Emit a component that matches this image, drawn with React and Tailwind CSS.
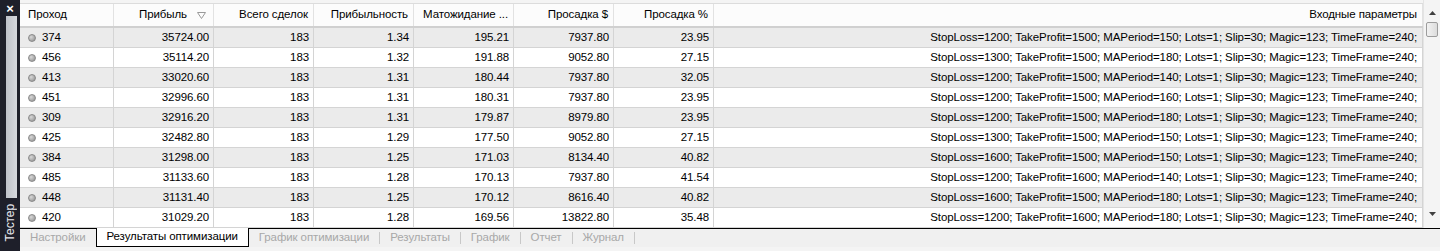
import React from "react";

const rows = [
  ["374", "35724.00", "183", "1.34", "195.21", "7937.80", "23.95", 1200, 1500, 150],
  ["456", "35114.20", "183", "1.32", "191.88", "9052.80", "27.15", 1300, 1500, 180],
  ["413", "33020.60", "183", "1.31", "180.44", "7937.80", "32.05", 1200, 1500, 140],
  ["451", "32996.60", "183", "1.31", "180.31", "7937.80", "23.95", 1200, 1500, 160],
  ["309", "32916.20", "183", "1.31", "179.87", "8979.80", "23.95", 1200, 1500, 180],
  ["425", "32482.80", "183", "1.29", "177.50", "9052.80", "27.15", 1300, 1500, 150],
  ["384", "31298.00", "183", "1.25", "171.03", "8134.40", "40.82", 1600, 1500, 150],
  ["485", "31133.60", "183", "1.28", "170.13", "7937.80", "41.54", 1200, 1600, 140],
  ["448", "31131.40", "183", "1.25", "170.12", "8616.40", "40.82", 1600, 1500, 180],
  ["420", "31029.20", "183", "1.28", "169.56", "13822.80", "35.48", 1200, 1600, 180],
];

const headers = ["Прибыль", "Всего сделок", "Прибыльность", "Матожидание ...", "Просадка $", "Просадка %"];

const tabs = ["Настройки", "Результаты оптимизации", "График оптимизации", "Результаты", "График", "Отчет", "Журнал"];

const grid = "grid grid-cols-[94px_100px_100px_100px_100px_100px_100px_1fr]";

function Dot() {
  return (
    <span className="w-[8px] h-[8px] rounded-full bg-[radial-gradient(circle_at_35%_35%,#d8d8d8,#8c8c8c)] border border-[#8a8a8a] shrink-0" />
  );
}

function Header() {
  return (
    <div className="h-[28px] bg-[#f4f4f4] pt-[3px]">
      <div className={`${grid} h-[25px] bg-[#fcfcfc] border-t border-[#dcdcdc] border-b-2 border-b-[#d0d0d0]`}>
        <div className="flex items-center pl-[8px] border-r border-[#e2e2e2]">Проход</div>
        {headers.map((h, i) => (
          <div key={h} className="flex items-center justify-end pr-[5px] border-r border-[#e2e2e2]">
            {h}
            {i === 0 && (
              <svg width="9" height="7" viewBox="0 0 9 7" className="ml-[10px] mr-[2px]">
                <path d="M0.5 0.5 H8.5 L4.5 6.5 Z" fill="none" stroke="#9a9a9a" />
              </svg>
            )}
          </div>
        ))}
        <div className="flex items-center justify-end pr-[5px] border-r border-[#e2e2e2]">Входные параметры</div>
      </div>
    </div>
  );
}

function Row({ r, odd }) {
  const params = `StopLoss=${r[7]}; TakeProfit=${r[8]}; MAPeriod=${r[9]}; Lots=1; Slip=30; Magic=123; TimeFrame=240;`;
  return (
    <div className={`${grid} h-[20px] ${odd ? "bg-[#ebebeb]" : "bg-white"}`}>
      <div className="flex items-center gap-[6px] pl-[8px] border-r border-b border-[#d4d4d4]">
        <Dot />
        {r[0]}
      </div>
      {r.slice(1, 7).map((v, i) => (
        <div key={i} className="flex items-center justify-end pr-[4px] border-r border-b border-[#d4d4d4]">
          {v}
        </div>
      ))}
      <div className="flex items-center justify-end pr-[5px] border-r border-b border-[#d4d4d4] whitespace-nowrap">{params}</div>
    </div>
  );
}

function Scrollbar() {
  return (
    <div className="w-[17px] bg-[#f4f4f4] flex flex-col items-center border-l border-[#e4e4e4]">
      <div className="h-[22px] flex items-center justify-center pt-[4px]">
        <svg width="7" height="4" viewBox="0 0 7 4">
          <path d="M0 4 L3.5 0 L7 4 Z" fill="#404040" />
        </svg>
      </div>
      <div className="w-[12px] h-[15px] rounded-[2px] border border-[#9c9c9c] bg-[linear-gradient(90deg,#f2f2f2,#dcdcdc)]" />
      <div className="flex-1" />
      <div className="h-[22px] flex items-center justify-center pb-[6px]">
        <svg width="7" height="4" viewBox="0 0 7 4">
          <path d="M0 0 L3.5 4 L7 0 Z" fill="#404040" />
        </svg>
      </div>
    </div>
  );
}

export default function App() {
  return (
    <div className="w-[1440px] h-[251px] flex bg-[#f0f0f0] overflow-hidden text-[11.5px] tracking-[-0.1px] text-black font-['Liberation_Sans',Arial,sans-serif]">
      <aside className="w-[20px] bg-[#1e1f2a] flex flex-col">
        <div className="h-[16px] flex items-center justify-center text-white text-[13px] font-bold leading-none">×</div>
        <div className="ml-[6px] w-[11px] h-[182px] bg-[linear-gradient(90deg,#bfc2c9,#d6d8dd)]" />
        <div className="flex-1 flex items-center justify-center pb-[4px]">
          <span className="[writing-mode:vertical-rl] rotate-180 text-[#e8e8ee] text-[12px] leading-none">Тестер</span>
        </div>
      </aside>
      <main className="flex-1 flex flex-col">
        <div className="h-[228px] flex bg-white">
          <div className="flex-1 flex flex-col overflow-hidden">
            <Header />
            {rows.map((r, i) => (
              <Row key={r[0]} r={r} odd={i % 2 === 0} />
            ))}
          </div>
          <Scrollbar />
        </div>
        <div className="h-[19px] flex border-t border-black bg-[#f0f0f0] text-[#a8a8a8]">
          {tabs.map((t, i) =>
            i === 1 ? (
              <div key={t} className="-mt-px h-[19px] px-[10px] flex items-center bg-white border-x border-b border-black text-black">
                {t}
              </div>
            ) : (
              <div key={t} className="flex items-center">
                <span className="px-[10px]">{t}</span>
                {i > 1 && <span className="w-px h-[12px] bg-[#c8c8c8]" />}
              </div>
            )
          )}
        </div>
        <div className="flex-1 bg-[#f4f4f4]" />
      </main>
    </div>
  );
}
